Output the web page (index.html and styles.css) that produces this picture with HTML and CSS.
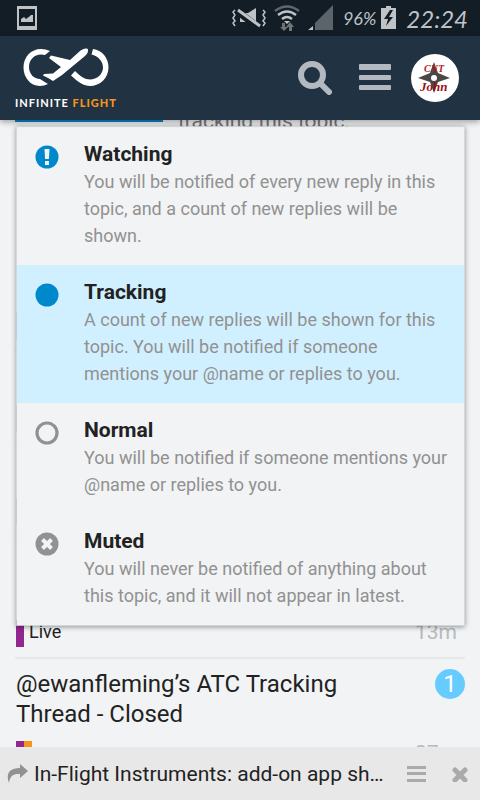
FILE: index.html
```html
<!DOCTYPE html>
<html lang="en">
<head>
  <meta charset="UTF-8" />
  <meta name="viewport" content="width=device-width, initial-scale=1.0" />
  <title>Infinite Flight</title>
  <link rel="stylesheet" href="styles.css">
</head>
<body>
  <div class="status">
    <svg width="20" height="24" viewBox="0 0 20 24"><path fill-rule="evenodd" d="M0 0h20v24H0zM2 3v17h16V3z"/><path d="M4 16v-3l3-2 2 2 4-3 1-1h2v7z"/></svg>
    <div class="signals">
      <svg width="34" height="24" viewBox="0 0 34 24"><path d="M3 4l-2 2 2 3-2 3 2 3-2 2 2 3M31 4l2 2-2 3 2 3-2 3 2 2-2 3" fill="none" stroke="#bfc3c6" stroke-width="1.500"/><path d="M8 7h8l8-5v18l-8-4H8z"/><path d="M5 5l22 17" stroke="#121d26" stroke-width="7"/><path d="M6 4l22 16" stroke="#bfc3c6" stroke-width="3"/></svg>
      <svg class="wifi" width="26" height="26" viewBox="0 0 26 26"><g fill="none" stroke="#bfc3c6" stroke-width="2.500"><path d="M1 6q12-9 24 0" stroke="#5f686f"/><path d="M4 10q9-7 18 0M8 14q5-4 10 0"/></g><path d="M10 16h6l-3 3z"/><path d="M8 18h3v4h3l-4 4-4-4h2zM15 26v-4h-3l4-5 4 5h-2v4z" fill="#6d757b"/></svg>
      <svg class="cell" width="26" height="26" viewBox="0 0 26 26"><path d="M25 0v25H7V18z" fill="#5b646b"/><path d="M5 21v4H0z"/></svg>
      <span class="percent">96%</span>
      <svg class="battery" width="15" height="24" viewBox="0 0 15 24"><path d="M5 0h5v2h5v21H0V2h5z"/><path d="M9 4L3 13h4l-2 7 7-9H8l4-7z" fill="#121d26"/></svg>
      <span class="clock">22:24</span>
    </div>
  </div>

  <header>
    <a href="#" class="logo">
      <svg width="88" height="40" viewBox="22 47 88 40"><path d="M50 51L45 55Q43 54.500 41 54.500C34 54.500 29 60 29 67C29 74 34 79 40 79L48 84Q44 86 40 86C30 86 23.500 77 23.500 67.500C23.500 57 31 49 41 49Q46 49 50 51Z"/><path d="M93 49C102 50 108.500 58 108.500 67.500C108.500 78 100 86 90 86C84 86 78 82 71 75.500L75 71C80 76 85 79.500 90 79.500C97 79.500 103 74 103 67.500C103 61 98 56 91.500 54.500Z"/><path d="M88 49.500C88.500 52 87 54 85 56L62 75L53 81L49 78.500L43 75.500L44 74L53 73.500L61 67L49 58L51 55.500L70 60L80 51C83 48.500 87 47.500 88 49.500Z"/></svg>
      <span class="name">INFINITE <b>FLIGHT</b></span>
    </a>
    <div class="tools">
      <button aria-label="Search"><svg width="34" height="34" viewBox="0 0 34 34"><circle cx="14" cy="14" r="11" fill="none" stroke="#b3b9c1" stroke-width="6"/><path d="M22 22l9 9" stroke="#b3b9c1" stroke-width="6" stroke-linecap="round"/></svg></button>
      <button aria-label="Menu"><svg width="32" height="28" viewBox="0 0 32 28"><rect width="32" height="6" rx="1"/><rect width="32" height="5" y="11" rx="1"/><rect width="32" height="5" y="21" rx="1"/></svg></button>
      <button class="avatar" aria-label="Account"><svg width="48" height="48" viewBox="0 0 48 48"><path d="M23 8l4 11 12 5-12 4-4 11-4-11-12-4 12-5z" fill="#4b4747"/><circle cx="23" cy="24" r="3" fill="#fff"/><text x="13" y="18" class="cnt">CNT</text><text x="9" y="37" class="john">John</text></svg></button>
    </div>
  </header>

  <main>
    <div class="notice">
      <button class="level" aria-label="Tracking"></button>
      <p>tracking this topic.</p>
    </div>

    <div class="menu">
      <button class="item">
        <svg width="24" height="24" viewBox="0 0 24 24"><circle cx="12" cy="12" r="11.500" fill="#0088cc"/><path d="M9.500 4h5l-.6 10h-3.800zM10 16h4v4h-4z" fill="#f1f3f5"/></svg>
        <span><strong>Watching</strong>You will be notified of every new reply in this topic, and a count of new replies will be shown.</span>
      </button>
      <button class="item active">
        <svg width="24" height="24" viewBox="0 0 24 24"><circle cx="12" cy="12" r="11.500" fill="#0088cc"/></svg>
        <span><strong>Tracking</strong>A count of new replies will be shown for this topic. You will be notified if someone mentions your @name or replies to you.</span>
      </button>
      <button class="item">
        <svg width="24" height="24" viewBox="0 0 24 24"><circle cx="12" cy="12" r="10" fill="none" stroke="#919191" stroke-width="3.200"/></svg>
        <span><strong>Normal</strong>You will be notified if someone mentions your @name or replies to you.</span>
      </button>
      <button class="item">
        <svg width="24" height="24" viewBox="0 0 24 24"><circle cx="12" cy="12" r="11.500" fill="#919191"/><path d="M7.500 7.500l9 9M16.500 7.500l-9 9" stroke="#f1f3f5" stroke-width="4"/></svg>
        <span><strong>Muted</strong>You will never be notified of anything about this topic, and it will not appear in latest.</span>
      </button>
    </div>

    <div class="topics">
      <div class="topic"><div class="meta"><i class="bar blue"></i></div></div>
      <div class="topic"><div class="meta"><i class="bar pink"></i></div></div>
      <div class="topic"><div class="meta"><i class="bar blue"></i></div></div>
      <div class="topic tall">
        <div class="meta"><i class="bar purple"></i><span class="category">Live</span><span class="age">13m</span></div>
      </div>
      <div class="topic">
        <div class="title"><a href="#">@ewanfleming’s ATC Tracking Thread - Closed</a><span class="badge">1</span></div>
        <div class="meta"><i class="bar purple"></i><i class="bar orange"></i><span class="age">27m</span></div>
      </div>
    </div>
  </main>

  <footer>
    <svg width="22" height="20" viewBox="0 0 22 20"><path d="M13 0l8 7-8 7v-4C7 9.500 3 11 2 19C-1 11 1 4 13 4z" fill="#919191"/></svg>
    <a href="#">In-Flight Instruments: add-on app sh…</a>
    <button aria-label="Expand"><svg width="19" height="17" viewBox="0 0 19 17"><path d="M0 1h19v3H0zM0 7h19v3H0zM0 14h19v3H0z"/></svg></button>
    <button aria-label="Close"><svg width="16" height="16" viewBox="0 0 16 16"><path d="M3 4l10 10M13 4L3 14" stroke="#aaa" stroke-width="5" stroke-linecap="round"/></svg></button>
  </footer>
</body>
</html>
```
FILE: styles.css
```css
* {
  margin: 0;
  padding: 0;
  box-sizing: border-box;
}
body {
  min-height: 100vh;
  font-family: Roboto, "Liberation Sans", sans-serif;
  background: #f1f3f5;
  color: #222;
}
a {
  color: inherit;
  text-decoration: none;
}
button {
  font: inherit;
  color: inherit;
  background: none;
  border: none;
  cursor: pointer;
}
svg {
  display: block;
  flex-shrink: 0;
}
.status {
  display: flex;
  justify-content: space-between;
  align-items: center;
  height: 36px;
  padding: 0 12px 0 17px;
  background: #121d26;
  color: #bfc3c6;
  fill: #bfc3c6;
}
.signals {
  display: flex;
  align-items: center;
}
.wifi {
  margin-left: 8px;
}
.cell {
  margin: 0 9px 0 8px;
}
.percent {
  font: italic 18px Lato, sans-serif;
}
.battery {
  margin: 0 10px 0 5px;
}
.clock {
  font: italic 24px Lato, sans-serif;
}
header {
  position: relative;
  z-index: 2;
  display: flex;
  justify-content: space-between;
  height: 84px;
  padding: 0 21px 0 15px;
  background: #213343;
  box-shadow: 0 2px 6px rgba(0, 0, 0, 0.35);
}
.logo {
  padding-top: 11px;
  color: #fff;
  fill: #fff;
}
.logo svg {
  margin-left: 7px;
}
.name {
  display: block;
  margin-top: 8px;
  font: bold 11px/16px Lato, sans-serif;
  letter-spacing: 1px;
}
.name b {
  color: #f7941d;
}
.tools {
  display: flex;
  align-items: center;
  gap: 20px;
  fill: #b3b9c1;
}
.tools button:first-child {
  margin-right: 7px;
}
.avatar {
  background: #fff;
  border-radius: 50%;
}
.cnt, .john {
  font: italic bold 10px "Liberation Serif", serif;
  fill: #b01c22;
}
.john {
  font-size: 13px;
  fill: #9c0f18;
}
main {
  position: relative;
  padding: 0 15px;
}
/* scrolled part way under the header */
.notice {
  display: flex;
  gap: 15px;
  height: 152px;
  margin-top: -14px;
}
.level {
  flex: 0 0 148px;
  height: 16px;
  background: #0088cc;
}
.notice p {
  color: #777;
  font-size: 21px;
  line-height: 30px;
}
.menu {
  position: absolute;
  z-index: 1;
  top: 20px;
  left: 16px;
  right: 15px;
  background: #f1f3f5;
  background-clip: padding-box;
  border: 1px solid rgba(220, 222, 224, 0.8);
  box-shadow: 0 1px 5px rgba(0, 0, 0, 0.4);
}
.item {
  display: flex;
  gap: 25px;
  width: 100%;
  padding: 14px 15px 16px 18px;
  color: #919191;
  font-size: 18px;
  line-height: 27px;
  text-align: left;
}
.item svg {
  margin-top: 4px;
}
.item strong {
  display: block;
  color: #222;
  font-size: 21px;
}
.active {
  background: #d1f0ff;
}
.topic {
  display: flex;
  flex-direction: column;
  justify-content: flex-end;
  min-height: 93px;
  padding: 10px 0;
  border-bottom: 2px solid #e7e8ea;
}
.tall {
  min-height: 122px;
}
.title {
  display: flex;
  justify-content: space-between;
  margin-bottom: 12px;
  font-size: 24px;
  line-height: 30px;
}
.title a {
  max-width: 370px;
  padding-left: 1px;
}
.badge {
  flex: 0 0 30px;
  height: 30px;
  border-radius: 50%;
  background: #66ccff;
  color: #fff;
  text-align: center;
}
.meta {
  display: flex;
  height: 27px;
  padding: 0 8px 0 1px;
  line-height: 24px;
}
.bar {
  width: 8px;
}
.purple {
  background: #92278f;
}
.orange {
  background: #f7941d;
}
.blue {
  background: #6fb3d9;
}
.pink {
  background: #d98fc0;
}
.category {
  margin-left: 5px;
  font-size: 18px;
}
.age {
  margin-left: auto;
  color: #b8babc;
  font-size: 21px;
}
footer {
  position: fixed;
  z-index: 3;
  left: 0;
  right: 0;
  bottom: 0;
  display: flex;
  align-items: center;
  height: 53px;
  padding: 0 12px 0 7px;
  background: #e8e8e8;
  fill: #aaa;
}
footer a {
  flex: 1;
  margin: 0 18px 0 5px;
  overflow: hidden;
  white-space: nowrap;
  font-size: 21px;
}
footer button + button {
  margin-left: 26px;
}
```
